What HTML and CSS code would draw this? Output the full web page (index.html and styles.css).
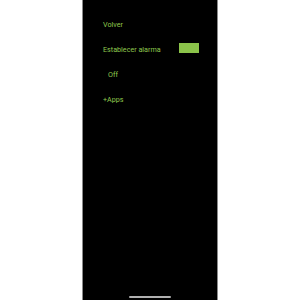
FILE: index.html
```html
<!DOCTYPE html>
<html lang="es">
<head>
    <meta charset="UTF-8">
    <meta name="viewport" content="width=device-width, initial-scale=1.0">
    <title>Alarma</title>
    <link rel="stylesheet" href="styles.css">
</head>
<body>
    <div class="phone">
        <div class="menu">
            <div class="row">Volver</div>
            <div class="row">
                <span>Establecer alarma</span>
                <span class="switch"></span>
            </div>
            <div class="row indent">Off</div>
            <div class="row">+Apps</div>
        </div>
        <div class="home-bar"></div>
    </div>
</body>
</html>
```

FILE: styles.css
```css
html, body {
    margin: 0;
    padding: 0;
    height: 100%;
    background: #fff;
}

body {
    display: flex;
    justify-content: center;
}

.phone {
    width: 134px;
    height: 100%;
    background: #000;
    border-left: 1px solid #8a8a8a;
    border-right: 1px solid #8a8a8a;
    display: flex;
    flex-direction: column;
    font-family: Roboto, "Liberation Sans", sans-serif;
    font-size: 7.2px;
    color: #8fc94e;
}

.menu {
    flex: 1;
    padding-top: 12px;
}

.row {
    height: 25px;
    line-height: 25px;
    padding-left: 20px;
    padding-right: 18px;
    display: flex;
    align-items: center;
    justify-content: space-between;
}

.indent {
    padding-left: 25px;
}

.switch {
    width: 20px;
    height: 10px;
    margin-bottom: 3px;
    background: #8bc34a;
}

.home-bar {
    width: 42px;
    height: 2px;
    background: #b0b0b0;
    margin: 0 auto 2px;
    border-radius: 1px;
}
```
